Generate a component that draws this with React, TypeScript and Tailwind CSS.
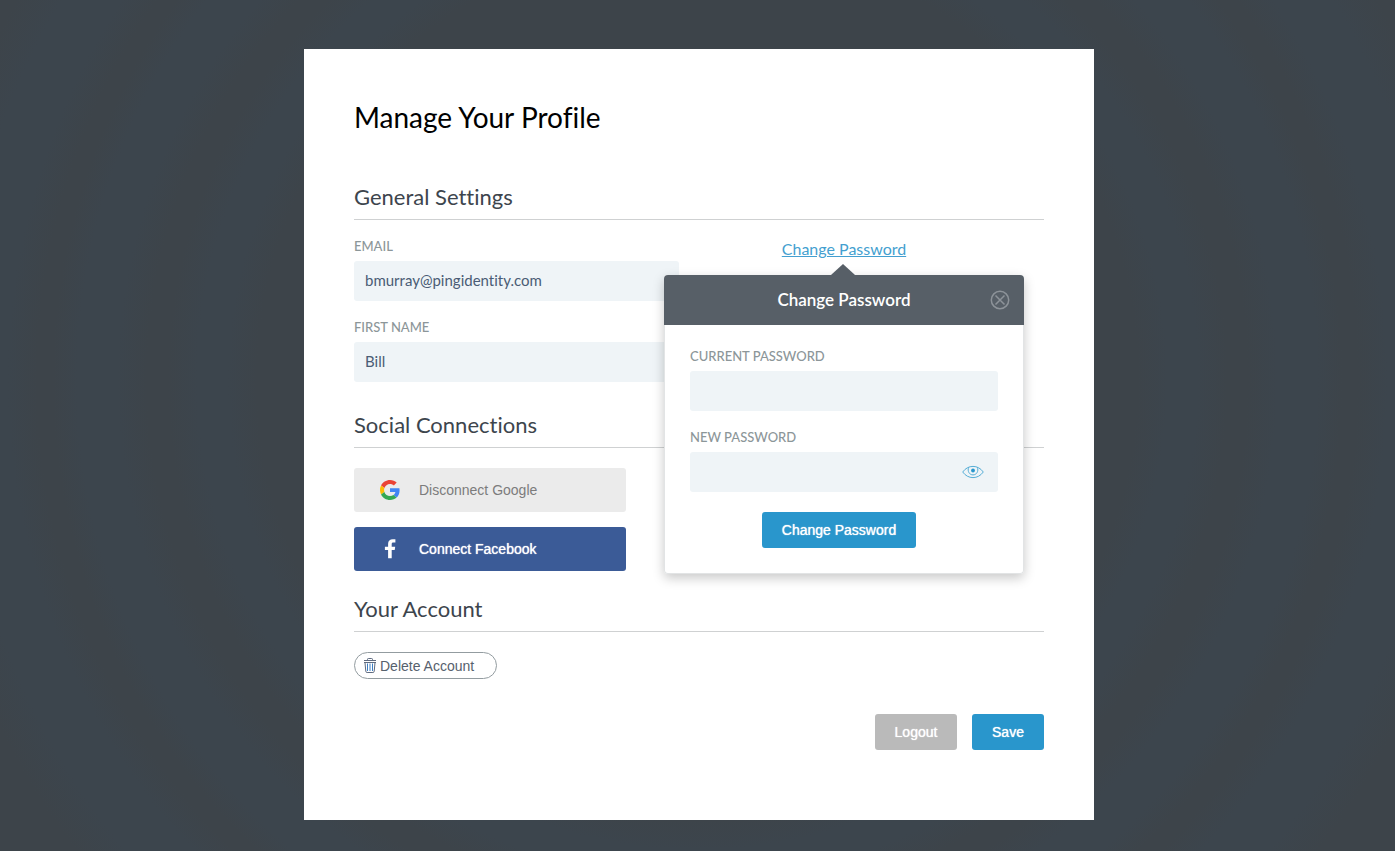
import { useState } from 'react';
import type { ReactNode } from 'react';

function GoogleLogo() {
  return (
    <svg viewBox="0 0 48 48" className="h-5 w-5" aria-hidden="true">
      <path fill="#EA4335" d="M24 9.5c3.54 0 6.71 1.22 9.21 3.6l6.85-6.85C35.9 2.38 30.47 0 24 0 14.62 0 6.51 5.38 2.56 13.22l7.98 6.19C12.43 13.72 17.74 9.5 24 9.5z" />
      <path fill="#4285F4" d="M46.98 24.55c0-1.57-.15-3.09-.38-4.55H24v9.02h12.94c-.58 2.96-2.26 5.48-4.78 7.18l7.73 6c4.51-4.18 7.09-10.36 7.09-17.65z" />
      <path fill="#FBBC05" d="M10.53 28.59A14.5 14.5 0 0 1 9.77 24c0-1.6.28-3.14.76-4.59l-7.98-6.19A23.9 23.9 0 0 0 0 24c0 3.88.92 7.54 2.56 10.78l7.97-6.19z" />
      <path fill="#34A853" d="M24 48c6.48 0 11.93-2.13 15.89-5.81l-7.73-6c-2.15 1.45-4.92 2.3-8.16 2.3-6.26 0-11.57-4.22-13.47-9.91l-7.98 6.19C6.51 42.62 14.62 48 24 48z" />
    </svg>
  );
}

function FacebookLogo() {
  return (
    <svg viewBox="0 0 20 20" className="h-5 w-5" fill="#fff" aria-hidden="true">
      <path d="M8.100 19.300v-8.200H4.900V7.800h3.200V4.700C8.100 1.700 10 .2 12.700.2c1.300 0 2.300.1 2.700.15V3.400h-1.900c-1.500 0-1.800.7-1.800 1.700V7.800h3.500l-.5 3.300h-3v8.200z" />
    </svg>
  );
}

function TrashIcon() {
  return (
    <svg viewBox="0 0 14 16" className="h-4 w-3.5" fill="none" stroke="#5f6b80" aria-hidden="true">
      <path d="M1 2.500h12M4.500 2.300V1.300c0-.5.300-.8.800-.8h3.400c.5 0 .8.300.8.800v1M1 4.500h12M2 4.700l.8 8.600c.05.800.5 1.200 1.300 1.200h5.800c.8 0 1.250-.4 1.300-1.200l.8-8.600" />
      <path stroke="#3d7fc4" d="M4.500 5.500v7.500M7 5.500v7.500M9.500 5.500v7.500" />
    </svg>
  );
}

function EyeIcon() {
  return (
    <svg viewBox="0 0 22 14" className="h-3.5 w-[22px]" fill="none" stroke="#55add6" aria-hidden="true">
      <path d="M.7 7C3.500 3.200 7 1.400 11 1.400S18.500 3.200 21.300 7C18.500 10.800 15 12.600 11 12.600S3.500 10.800.7 7z" />
      <path d="M6.600 2.300C5.200 6.300 7.400 9.900 11 9.900s5.800-3.600 4.400-7.600" />
      <circle cx="11" cy="5.500" r="1.900" fill="#2996cc" stroke="none" />
    </svg>
  );
}

function CloseIcon() {
  return (
    <svg viewBox="0 0 20 20" className="h-5 w-5" fill="none" stroke="currentColor" strokeWidth="1.500" aria-hidden="true">
      <circle cx="10" cy="10" r="8.700" />
      <path d="M5.500 5.500l9 9M14.500 5.500l-9 9" />
    </svg>
  );
}

function SectionTitle({ children }: { children: ReactNode }) {
  return (
    <h2 className="border-b border-[#cfd1d2] pb-2 text-[22px] leading-7 text-[#3d454d]">{children}</h2>
  );
}

type FieldProps = { id: string; label: string; type?: string; value?: string; children?: ReactNode };

function Field({ id, label, type = 'text', value = '', children }: FieldProps) {
  return (
    <div>
      <label htmlFor={id} className="block text-[13px] leading-5 font-medium text-[#8c9699]">
        {label}
      </label>
      <div className="mt-[5px] flex h-10 items-center rounded-[3px] bg-[#eff4f7]">
        <input
          id={id}
          type={type}
          defaultValue={value}
          className="h-full min-w-0 flex-1 bg-transparent pb-0.5 pl-[11px] text-[15px] text-[#4a5c75] outline-none"
        />
        {children}
      </div>
    </div>
  );
}

function PasswordPopover({ onClose }: { onClose: () => void }) {
  const [visible, setVisible] = useState(false);
  return (
    <div
      role="dialog"
      aria-label="Change Password"
      className="absolute top-full left-1/2 z-10 mt-[15px] w-[360px] -translate-x-1/2 rounded-[4px] bg-white shadow-[0_4px_12px_rgba(0,0,0,0.22)]"
    >
      <svg viewBox="0 0 24 11" className="absolute -top-[11px] left-[167px] h-[11px] w-6" aria-hidden="true">
        <path d="M0 11L12 0l12 11z" fill="#575f67" />
      </svg>
      <header className="flex h-[50px] items-center rounded-t-[4px] bg-[#575f67] pr-3.5 pl-[34px]">
        <h3 className="flex-1 text-center text-[17px] font-semibold text-white">Change Password</h3>
        <button type="button" aria-label="Close" onClick={onClose} className="text-[#8d9399]">
          <CloseIcon />
        </button>
      </header>
      <form
        className="flex flex-col gap-4 rounded-b-[4px] border border-t-0 border-[#e2e4e5] px-[25px] pt-[21px] pb-[25px]"
        onSubmit={(event) => event.preventDefault()}
      >
        <Field id="current-password" label="CURRENT PASSWORD" type="password" />
        <Field id="new-password" label="NEW PASSWORD" type={visible ? 'text' : 'password'}>
          <button type="button" aria-label="Show password" onClick={() => setVisible(!visible)} className="mr-3.5">
            <EyeIcon />
          </button>
        </Field>
        <button
          type="submit"
          className="mt-1 mr-[10px] h-9 w-[154px] self-center rounded-[3px] bg-[#2996cc] font-['Liberation_Sans',sans-serif] text-sm text-white [text-shadow:0_0_1px_#fff]"
        >
          Change Password
        </button>
      </form>
    </div>
  );
}

export default function App() {
  const [open, setOpen] = useState(true);
  return (
    <div className="min-h-screen bg-[#3d454c] bg-[radial-gradient(circle_at_50%_380px,#3d444a_0px,#3d444a_440px,#3c454d_470px,#3c454d_500px,#3d444a_530px,#3d444a_550px,#3c454d_580px,#3c454d_620px,#3d444a_645px,#3d444a_660px,#3c454d_690px,#3c454d_740px,#3d444a_780px)] pt-[49px] pb-[31px] pl-[3px] font-[Lato,sans-serif] [font-variant-ligatures:none]">
      <main className="mx-auto max-w-[790px] bg-white px-[50px] pt-[50px] pb-[70px]">
        <h1 className="text-[28px] leading-9 text-black">Manage Your Profile</h1>

        <section className="mt-12">
          <SectionTitle>General Settings</SectionTitle>
          <div className="mt-4 flex">
            <div className="flex w-[325px] flex-col gap-4">
              <Field id="email" label="EMAIL" type="email" value="bmurray@pingidentity.com" />
              <Field id="first-name" label="FIRST NAME" value="Bill" />
            </div>
            <div className="flex flex-1 items-start justify-center pt-0.5 pr-[35px]">
              <div className="relative">
                <a
                  href="#change-password"
                  onClick={() => setOpen(true)}
                  className="block text-base leading-[22px] text-[#449fd0] underline"
                >
                  Change Password
                </a>
                {open && <PasswordPopover onClose={() => setOpen(false)} />}
              </div>
            </div>
          </div>
        </section>

        <section className="mt-[29px]">
          <SectionTitle>Social Connections</SectionTitle>
          <div className="mt-5 flex w-[272px] flex-col gap-[15px] font-['Liberation_Sans',sans-serif] text-sm">
            <button type="button" className="flex h-11 items-center gap-[19px] rounded-[3px] bg-[#ebebeb] pl-[26px] text-[#7c7c7c]">
              <GoogleLogo />
              Disconnect Google
            </button>
            <button
              type="button"
              className="flex h-11 items-center gap-[19px] rounded-[3px] bg-[#3b5b97] pl-[26px] text-white [text-shadow:0_0_1px_#fff]"
            >
              <FacebookLogo />
              Connect Facebook
            </button>
          </div>
        </section>

        <section className="mt-6">
          <SectionTitle>Your Account</SectionTitle>
          <button
            type="button"
            className="mt-5 flex h-[27px] items-center gap-[3px] rounded-full border border-[#939ca0] pr-[22px] pl-2 font-['Liberation_Sans',sans-serif] text-sm text-[#56616d]"
          >
            <TrashIcon />
            Delete Account
          </button>
        </section>

        <footer className="mt-[35px] flex justify-end gap-[15px] font-['Liberation_Sans',sans-serif] text-sm text-white">
          <button type="button" className="h-9 w-[82px] rounded-[3px] bg-[#bababa] [text-shadow:0_0_1px_#fff]">
            Logout
          </button>
          <button type="button" className="h-9 w-[72px] rounded-[3px] bg-[#2996cc] [text-shadow:0_0_1px_#fff]">
            Save
          </button>
        </footer>
      </main>
    </div>
  );
}
